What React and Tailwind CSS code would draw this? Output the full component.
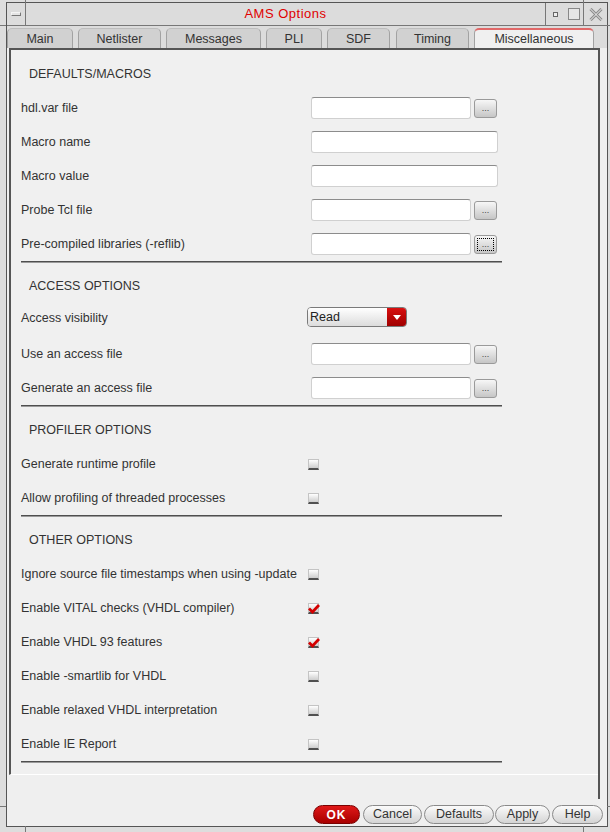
import React from 'react';

function Browse({ focus }) {
  return (
    <div className="relative ml-[3px] w-[23px] h-[19px] rounded-[3px] border border-[#9a9a9a] bg-gradient-to-b from-[#f7f7f7] to-[#c6c6c6] flex items-end justify-center">
      <span className="text-[9px] leading-none pb-[4px] text-[#444]">...</span>
      {focus && <span className="absolute inset-[2px] border border-dotted border-black" />}
    </div>
  );
}

function Field({ browse, focus }) {
  return (
    <div className="flex items-center">
      <div className={browse ? 'w-[160px] h-[22px] bg-white border border-[#d0d0d0] border-t-[#8c8c8c] rounded-[3px]' : 'w-[187px] h-[22px] bg-white border border-[#d0d0d0] border-t-[#8c8c8c] rounded-[3px]'} />
      {browse && <Browse focus={focus} />}
    </div>
  );
}

function Check({ on }) {
  return (
    <div className="-ml-[3px] relative w-[11px] h-[11px] bg-gradient-to-b from-white to-[#cdcdcd] border border-[#c4c4c4] border-b-2 border-b-[#505050]">
      {on && (
        <svg className="absolute -left-[1px] -top-[1px]" width="12" height="11" viewBox="0 0 12 11">
          <path d="M1 5.5 L4.5 9 L11 2" fill="none" stroke="#d40000" strokeWidth="2.8" strokeLinejoin="miter" />
        </svg>
      )}
    </div>
  );
}

function Select() {
  return (
    <div className="-ml-[4px] flex w-[100px] h-[20px] rounded-[4px] border border-[#7a7a7a] overflow-hidden">
      <div className="flex-1 bg-gradient-to-b from-white to-[#dcdcdc] text-[12.5px] text-[#222] leading-[18px] pl-[2px]">Read</div>
      <div className="w-[19px] bg-gradient-to-b from-[#d81010] to-[#a00000] flex items-center justify-center">
        <svg width="8" height="5" viewBox="0 0 8 5"><path d="M0 0 L8 0 L4 5 Z" fill="#fff" /></svg>
      </div>
    </div>
  );
}

function Row({ label, children, lift }) {
  return (
    <div className="h-[34px] flex items-center">
      <div className={lift ? 'w-[290px] text-[12.5px] text-[#333] whitespace-nowrap -mt-[3px]' : 'w-[290px] text-[12.5px] text-[#333] whitespace-nowrap'}>{label}</div>
      {children}
    </div>
  );
}

function Section({ title, first, children }) {
  return (
    <div className={first ? '' : 'mt-[6px]'}>
      <div className="h-[34px] flex items-center pl-[8px] text-[12.5px] text-[#333]">{title}</div>
      {children}
      <div className="w-[481px] h-[2px] border-t border-[#4f4f4f] border-b border-b-[#9a9a9a]" />
    </div>
  );
}

const tabs = [
  { name: 'Main', cls: 'w-[66px]' },
  { name: 'Netlister', cls: 'w-[83px] ml-[5px]' },
  { name: 'Messages', cls: 'w-[95px] ml-[5px]' },
  { name: 'PLI', cls: 'w-[56px] ml-[5px]' },
  { name: 'SDF', cls: 'w-[63px] ml-[5px]' },
  { name: 'Timing', cls: 'w-[73px] ml-[6px]' },
];

function Btn({ children, cls }) {
  return (
    <div className={'h-[19px] rounded-full border border-[#8a8a8a] bg-gradient-to-b from-[#fbfbfb] to-[#d4d4d4] text-[12.5px] text-[#333] flex items-center justify-center ' + cls}>
      {children}
    </div>
  );
}

export default function App() {
  return (
    <div className="relative w-[610px] h-[832px] bg-[#dddddd] pt-[2px] pl-[6px] font-['Liberation_Sans',Arial,sans-serif]">
      {/* frame ticks */}
      <span className="absolute left-[25px] top-0 w-px h-[3px] bg-[#777]" />
      <span className="absolute left-[583px] top-0 w-px h-[3px] bg-[#777]" />
      <span className="absolute left-[25px] bottom-0 w-px h-[6px] bg-[#777]" />
      <span className="absolute left-[583px] bottom-0 w-px h-[6px] bg-[#777]" />
      <span className="absolute left-0 top-[25px] w-[6px] h-px bg-[#777]" />
      <span className="absolute right-0 top-[25px] w-[3px] h-px bg-[#777]" />
      <span className="absolute left-0 top-[806px] w-[6px] h-px bg-[#777]" />
      <span className="absolute right-0 top-[806px] w-[3px] h-px bg-[#777]" />

      <div className="w-[602px] h-[825px] border border-[#555] bg-[#efefef] flex flex-col">
        {/* title bar */}
        <div className="flex h-[23px] border-b border-[#777] bg-[#dcdcdc]">
          <div className="w-[19px] border-r border-[#777] flex items-center justify-center">
            <span className="w-[10px] h-[4px] border border-[#777] border-t-[#f4f4f4] border-l-[#f4f4f4] bg-[#e4e4e4]" />
          </div>
          <div className="flex-1 text-center text-[13px] text-[#e00000] leading-[22px] tracking-[0.5px]">AMS Options</div>
          <div className="w-[38px] border-l border-[#777] flex items-center">
            <span className="ml-[7px] w-[5px] h-[5px] border border-[#666] bg-[#eee]" />
            <span className="ml-[10px] w-[12px] h-[12px] border border-[#888] bg-[#e6e6e6]" />
          </div>
          <div className="w-[24px] border-l border-[#777] flex items-center justify-center">
            <svg width="14" height="13" viewBox="0 0 14 13">
              <path d="M1.5 1 L12.5 12 M12.5 1 L1.5 12" stroke="#8a8a8a" strokeWidth="3" />
              <path d="M1.5 1 L12.5 12 M12.5 1 L1.5 12" stroke="#f2f2f2" strokeWidth="1" />
            </svg>
          </div>
        </div>

        {/* tabs */}
        <div className="h-[22px] pt-[2px] flex bg-[#dcdcdc]">
          {tabs.map((t) => (
            <div key={t.name} className={'h-[20px] pt-[2px] rounded-t-[5px] border border-b-0 border-[#a2a2a2] border-t-[#bdbdbd] bg-[#d1d1d1] text-[12.5px] text-[#333] flex items-center justify-center ' + t.cls}>
              {t.name}
            </div>
          ))}
          <div className="w-[120px] ml-[5px] h-[20px] pt-[1px] rounded-t-[5px] border border-b-0 border-[#a2a2a2] border-t-2 border-t-[#e06868] bg-[#f0f0f0] text-[12.5px] text-[#333] flex items-center justify-center">
            Miscellaneous
          </div>
        </div>

        {/* body */}
        <div className="flex-1 flex flex-col">
          <div className="ml-[2px] mr-[7px] border-r-2 border-[#555] flex-1 flex flex-col">
            <div className="flex-1 border-t-2 border-l-2 border-[#555] border-b border-b-white bg-[#f0f0f0] pl-[10px] pt-[7px]">
              <Section title="DEFAULTS/MACROS" first>
                <Row label="hdl.var file"><Field browse /></Row>
                <Row label="Macro name"><Field /></Row>
                <Row label="Macro value"><Field /></Row>
                <Row label="Probe Tcl file"><Field browse /></Row>
                <Row label="Pre-compiled libraries (-reflib)"><Field browse focus /></Row>
              </Section>
              <Section title="ACCESS OPTIONS">
                <Row label="Access visibility" lift><div className="-mt-[6px]"><Select /></div></Row>
                <Row label="Use an access file"><Field browse /></Row>
                <Row label="Generate an access file"><Field browse /></Row>
              </Section>
              <Section title="PROFILER OPTIONS">
                <Row label="Generate runtime profile"><Check /></Row>
                <Row label="Allow profiling of threaded processes"><Check /></Row>
              </Section>
              <Section title="OTHER OPTIONS">
                <Row label="Ignore source file timestamps when using -update"><Check /></Row>
                <Row label="Enable VITAL checks (VHDL compiler)"><Check on /></Row>
                <Row label="Enable VHDL 93 features"><Check on /></Row>
                <Row label="Enable -smartlib for VHDL"><Check /></Row>
                <Row label="Enable relaxed VHDL interpretation"><Check /></Row>
                <Row label="Enable IE Report"><Check /></Row>
              </Section>
            </div>
            <div className="h-[24px]" />
          </div>
          <div className="h-[27px] flex justify-end pt-[6px] pr-[4px]">
            <div className="w-[47px] h-[19px] rounded-full border border-[#7a0000] bg-gradient-to-b from-[#e01818] to-[#a80000] text-[12px] font-bold text-white flex items-center justify-center tracking-[1px]">OK</div>
            <Btn cls="w-[59px] ml-[3px]">Cancel</Btn>
            <Btn cls="w-[70px] ml-[2px]">Defaults</Btn>
            <Btn cls="w-[55px] ml-[1px]">Apply</Btn>
            <Btn cls="w-[51px] ml-[2px]">Help</Btn>
          </div>
        </div>
      </div>
    </div>
  );
}
